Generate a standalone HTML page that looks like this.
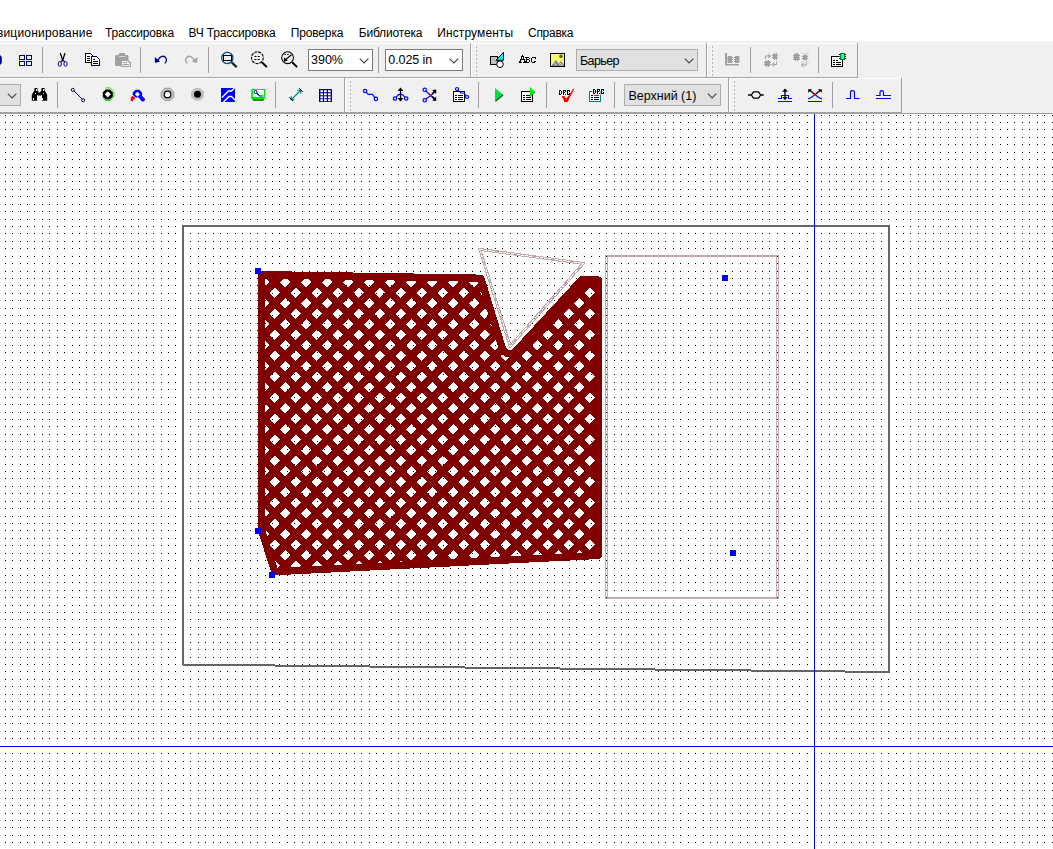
<!DOCTYPE html>
<html><head><meta charset="utf-8"><title>PCB Layout</title>
<style>
html,body{margin:0;padding:0;background:#fff;}
body{width:1053px;height:849px;position:relative;overflow:hidden;font-family:"Liberation Sans",sans-serif;}
.abs{position:absolute;}
#dock{left:0;top:41px;width:1053px;height:73px;background:#f0f0f0;}
.mi{position:absolute;top:26px;font-size:12px;line-height:15px;color:#000;white-space:nowrap;}
.combo{position:absolute;box-sizing:border-box;height:22px;border:1px solid #7a7a7a;background:#fff;font-size:12.5px;line-height:20px;color:#000;white-space:nowrap;overflow:hidden;}
.combo.dis{background:#e1e1e1;border-color:#adadad;}
.combo span{position:absolute;left:3px;top:-0.5px;}
#c1{left:2px}#c2{left:2.3px;letter-spacing:-0.08px}#c3{letter-spacing:-0.6px;top:0.5px}#c4{left:3.4px;top:0.5px}
</style></head><body>
<svg id="cv" width="1053" height="849" viewBox="0 0 1053 849" shape-rendering="crispEdges" style="position:absolute;left:0;top:0">
<!-- grid dots -->
<defs><mask id="rowmask" maskUnits="userSpaceOnUse" x="0" y="0" width="1053" height="849"><path fill="none" stroke="#fff" stroke-width="1" d="M0,115.5H1053M0,122.5H1053M0,129.5H1053M0,137.5H1053M0,144.5H1053M0,152.5H1053M0,159.5H1053M0,167.5H1053M0,174.5H1053M0,181.5H1053M0,189.5H1053M0,196.5H1053M0,204.5H1053M0,211.5H1053M0,219.5H1053M0,226.5H1053M0,233.5H1053M0,241.5H1053M0,248.5H1053M0,256.5H1053M0,263.5H1053M0,271.5H1053M0,278.5H1053M0,285.5H1053M0,293.5H1053M0,300.5H1053M0,308.5H1053M0,315.5H1053M0,323.5H1053M0,330.5H1053M0,337.5H1053M0,345.5H1053M0,352.5H1053M0,360.5H1053M0,367.5H1053M0,374.5H1053M0,382.5H1053M0,389.5H1053M0,397.5H1053M0,404.5H1053M0,412.5H1053M0,419.5H1053M0,426.5H1053M0,434.5H1053M0,441.5H1053M0,449.5H1053M0,456.5H1053M0,464.5H1053M0,471.5H1053M0,478.5H1053M0,486.5H1053M0,493.5H1053M0,501.5H1053M0,508.5H1053M0,516.5H1053M0,523.5H1053M0,530.5H1053M0,538.5H1053M0,545.5H1053M0,553.5H1053M0,560.5H1053M0,568.5H1053M0,575.5H1053M0,582.5H1053M0,590.5H1053M0,597.5H1053M0,605.5H1053M0,612.5H1053M0,619.5H1053M0,627.5H1053M0,634.5H1053M0,642.5H1053M0,649.5H1053M0,657.5H1053M0,664.5H1053M0,671.5H1053M0,679.5H1053M0,686.5H1053M0,694.5H1053M0,701.5H1053M0,709.5H1053M0,716.5H1053M0,723.5H1053M0,731.5H1053M0,738.5H1053M0,746.5H1053M0,753.5H1053M0,761.5H1053M0,768.5H1053M0,775.5H1053M0,783.5H1053M0,790.5H1053M0,798.5H1053M0,805.5H1053M0,813.5H1053M0,820.5H1053M0,827.5H1053M0,835.5H1053M0,842.5H1053"/></mask></defs>
<path mask="url(#rowmask)" fill="none" stroke="#000" stroke-width="1" d="M5.5,114V849M12.5,114V849M20.5,114V849M27.5,114V849M34.5,114V849M42.5,114V849M49.5,114V849M57.5,114V849M64.5,114V849M72.5,114V849M79.5,114V849M86.5,114V849M94.5,114V849M101.5,114V849M109.5,114V849M116.5,114V849M123.5,114V849M131.5,114V849M138.5,114V849M146.5,114V849M153.5,114V849M161.5,114V849M168.5,114V849M175.5,114V849M183.5,114V849M190.5,114V849M198.5,114V849M205.5,114V849M213.5,114V849M220.5,114V849M227.5,114V849M235.5,114V849M242.5,114V849M250.5,114V849M257.5,114V849M265.5,114V849M272.5,114V849M279.5,114V849M287.5,114V849M294.5,114V849M302.5,114V849M309.5,114V849M317.5,114V849M324.5,114V849M331.5,114V849M339.5,114V849M346.5,114V849M354.5,114V849M361.5,114V849M369.5,114V849M376.5,114V849M383.5,114V849M391.5,114V849M398.5,114V849M406.5,114V849M413.5,114V849M420.5,114V849M428.5,114V849M435.5,114V849M443.5,114V849M450.5,114V849M458.5,114V849M465.5,114V849M472.5,114V849M480.5,114V849M487.5,114V849M495.5,114V849M502.5,114V849M510.5,114V849M517.5,114V849M524.5,114V849M532.5,114V849M539.5,114V849M547.5,114V849M554.5,114V849M562.5,114V849M569.5,114V849M576.5,114V849M584.5,114V849M591.5,114V849M599.5,114V849M606.5,114V849M614.5,114V849M621.5,114V849M628.5,114V849M636.5,114V849M643.5,114V849M651.5,114V849M658.5,114V849M665.5,114V849M673.5,114V849M680.5,114V849M688.5,114V849M695.5,114V849M703.5,114V849M710.5,114V849M717.5,114V849M725.5,114V849M732.5,114V849M740.5,114V849M747.5,114V849M755.5,114V849M762.5,114V849M769.5,114V849M777.5,114V849M784.5,114V849M792.5,114V849M799.5,114V849M807.5,114V849M814.5,114V849M821.5,114V849M829.5,114V849M836.5,114V849M844.5,114V849M851.5,114V849M859.5,114V849M866.5,114V849M873.5,114V849M881.5,114V849M888.5,114V849M896.5,114V849M903.5,114V849M910.5,114V849M918.5,114V849M925.5,114V849M933.5,114V849M940.5,114V849M948.5,114V849M955.5,114V849M962.5,114V849M970.5,114V849M977.5,114V849M985.5,114V849M992.5,114V849M1000.5,114V849M1007.5,114V849M1014.5,114V849M1022.5,114V849M1029.5,114V849M1037.5,114V849M1044.5,114V849M1052.5,114V849"/>

<!-- keepout outlines -->
<g fill="none" stroke="#c2aaaa">
<path stroke-width="2" d="M605,256H779M605,598H779"/>
<path stroke-width="1" d="M605.5,255V599M607.5,255V599M776.5,255V599M778.5,255V599"/>
<path stroke-width="3" stroke-linejoin="round" d="M479.8,249.4L583.3,263.4L510.2,346.3Z"/>
<path stroke="#fff" stroke-width="1" stroke-dasharray="3 1 3 1 3 1 3 4" d="M479.8,249.4L583.3,263.4L510.2,346.3Z"/>
</g>
<path fill="#000" d="M606,256h1v1h-1zM777,256h1v1h-1zM606,597h1v1h-1zM777,597h1v1h-1z"/>
<!-- copper pour -->
<path fill="#800000" fill-rule="evenodd" d="M260.9,271.0 260.3,271.2 259.1,272.0 258.3,273.2 258.0,274.6 258.0,530.9 258.2,532.0 271.4,572.8 271.7,573.4 272.6,574.4 273.7,575.1 275.1,575.3 598.7,559.0 600.0,558.6 601.1,557.9 601.8,556.7 602.1,555.4 602.1,280.0 601.8,278.6 601.1,277.4 599.9,276.7 598.6,276.4 581.5,276.1 580.1,276.4 579.4,276.8 513.1,348.7 511.6,349.8 510.0,350.2 508.4,349.9 507.3,349.3 506.5,348.4 505.8,347.2 484.3,277.0 483.6,275.7 483.0,275.2 481.7,274.6ZM301.1,282.4 304.5,279.0 308.1,279.0 311.5,282.4 306.3,287.6ZM285.3,287.6 280.1,282.4 283.9,278.6 286.8,278.7 290.5,282.4ZM265.3,286.6 265.3,278.3 269.5,282.4ZM269.6,292.9 274.8,287.7 280.0,292.9 274.8,298.1ZM295.8,298.1 290.6,292.9 295.8,287.7 301.0,292.9ZM306.3,308.6 301.1,303.4 306.3,298.2 311.5,303.4ZM280.1,303.4 285.3,298.2 290.5,303.4 285.3,308.6ZM265.3,307.6 265.3,299.2 269.5,303.4ZM295.8,319.1 290.6,313.9 295.8,308.7 301.0,313.9ZM274.8,319.1 269.6,313.9 274.8,308.7 280.0,313.9ZM306.3,329.6 301.1,324.4 306.3,319.2 311.5,324.4ZM285.3,329.6 280.1,324.4 285.3,319.2 290.5,324.4ZM265.3,328.6 265.3,320.2 269.5,324.4ZM269.6,334.9 274.8,329.7 280.0,334.9 274.8,340.1ZM295.8,340.1 290.6,334.9 295.8,329.7 301.0,334.9ZM306.3,350.6 301.1,345.4 306.3,340.2 311.5,345.4ZM280.1,345.4 285.3,340.2 290.5,345.4 285.3,350.6ZM265.3,349.6 265.3,341.2 269.5,345.4ZM295.8,361.1 290.6,355.9 295.8,350.7 301.0,355.9ZM269.6,355.9 274.8,350.7 280.0,355.9 274.8,361.1ZM265.3,370.6 265.3,362.2 269.5,366.4ZM285.3,371.6 280.1,366.4 285.3,361.2 290.5,366.4ZM295.8,382.1 290.6,376.9 295.8,371.7 301.0,376.9ZM274.8,382.1 269.6,376.9 274.8,371.7 280.0,376.9ZM265.3,391.6 265.3,383.2 269.5,387.4ZM285.3,392.6 280.1,387.4 285.3,382.2 290.5,387.4ZM290.6,397.9 295.8,392.7 301.0,397.9 295.8,403.1ZM274.8,403.1 269.6,397.9 274.8,392.7 280.0,397.9ZM265.3,412.6 265.3,404.2 269.5,408.4ZM280.1,408.4 285.3,403.2 290.5,408.4 285.3,413.6ZM295.8,424.1 290.6,418.9 295.8,413.7 301.0,418.9ZM274.8,424.1 269.6,418.9 274.8,413.7 280.0,418.9ZM280.1,429.4 285.3,424.2 290.5,429.4 285.3,434.6ZM265.3,433.6 265.3,425.2 269.5,429.4ZM274.8,445.1 269.6,439.9 274.8,434.7 280.0,439.9ZM295.8,445.1 290.6,439.9 295.8,434.7 301.0,439.9ZM285.3,455.6 280.1,450.4 285.3,445.2 290.5,450.4ZM265.3,454.6 265.3,446.2 269.5,450.4ZM306.3,455.6 301.1,450.4 306.3,445.2 311.5,450.4ZM269.6,460.9 274.8,455.7 280.0,460.9 274.8,466.1ZM295.8,466.1 290.6,460.9 295.8,455.7 301.0,460.9ZM265.3,475.6 265.3,467.2 269.5,471.4ZM280.1,471.4 285.3,466.2 290.5,471.4 285.3,476.6ZM295.8,487.1 290.6,481.9 295.8,476.7 301.0,481.9ZM274.8,487.1 269.6,481.9 274.8,476.7 280.0,481.9ZM280.1,492.4 285.3,487.2 290.5,492.4 285.3,497.6ZM265.3,496.6 265.3,488.2 269.5,492.4ZM274.8,508.1 269.6,502.9 274.8,497.7 280.0,502.9ZM295.8,508.1 290.6,502.9 295.8,497.7 301.0,502.9ZM265.3,517.6 265.3,509.2 269.5,513.4ZM285.3,518.6 280.1,513.4 285.3,508.2 290.5,513.4ZM295.8,529.1 290.6,523.9 295.8,518.7 301.0,523.9ZM269.6,523.9 274.8,518.7 280.0,523.9 274.8,529.1ZM285.3,539.6 280.1,534.4 285.3,529.2 290.5,534.4ZM267.3,536.6 265.3,530.3 265.3,530.2 269.5,534.4ZM290.6,544.9 295.8,539.7 301.0,544.9 295.8,550.1ZM274.8,550.1 270.3,545.6 269.9,544.6 274.8,539.7 280.0,544.9ZM285.3,560.6 280.1,555.4 285.3,550.2 290.5,555.4ZM290.6,565.9 295.8,560.7 301.0,565.9 300.2,566.7 291.8,567.1ZM278.1,567.8 277.5,567.8 275.4,561.3 280.0,565.9ZM327.3,287.6 322.1,282.4 325.2,279.3 329.5,279.4 332.5,282.4ZM316.8,298.1 311.6,292.9 316.8,287.7 322.0,292.9ZM337.8,298.1 332.6,292.9 337.8,287.7 343.0,292.9ZM327.3,308.6 322.1,303.4 327.3,298.2 332.5,303.4ZM348.3,308.6 343.1,303.4 348.3,298.2 353.5,303.4ZM332.6,313.9 337.8,308.7 343.0,313.9 337.8,319.1ZM316.8,319.1 311.6,313.9 316.8,308.7 322.0,313.9ZM348.3,329.6 343.1,324.4 348.3,319.2 353.5,324.4ZM322.1,324.4 327.3,319.2 332.5,324.4 327.3,329.6ZM337.8,340.1 332.6,334.9 337.8,329.7 343.0,334.9ZM316.8,340.1 311.6,334.9 316.8,329.7 322.0,334.9ZM343.1,345.4 348.3,340.2 353.5,345.4 348.3,350.6ZM327.3,350.6 322.1,345.4 327.3,340.2 332.5,345.4ZM316.8,361.1 311.6,355.9 316.8,350.7 322.0,355.9ZM337.8,361.1 332.6,355.9 337.8,350.7 343.0,355.9ZM348.3,371.6 343.1,366.4 348.3,361.2 353.5,366.4ZM327.3,371.6 322.1,366.4 327.3,361.2 332.5,366.4ZM306.3,371.6 301.1,366.4 306.3,361.2 311.5,366.4ZM332.6,376.9 337.8,371.7 343.0,376.9 337.8,382.1ZM316.8,382.1 311.6,376.9 316.8,371.7 322.0,376.9ZM327.3,392.6 322.1,387.4 327.3,382.2 332.5,387.4ZM301.1,387.4 306.3,382.2 311.5,387.4 306.3,392.6ZM348.3,392.6 343.1,387.4 348.3,382.2 353.5,387.4ZM316.8,403.1 311.6,397.9 316.8,392.7 322.0,397.9ZM332.6,397.9 337.8,392.7 343.0,397.9 337.8,403.1ZM348.3,413.6 343.1,408.4 348.3,403.2 353.5,408.4ZM327.3,413.6 322.1,408.4 327.3,403.2 332.5,408.4ZM306.3,413.6 301.1,408.4 306.3,403.2 311.5,408.4ZM316.8,424.1 311.6,418.9 316.8,413.7 322.0,418.9ZM337.8,424.1 332.6,418.9 337.8,413.7 343.0,418.9ZM348.3,434.6 343.1,429.4 348.3,424.2 353.5,429.4ZM322.1,429.4 327.3,424.2 332.5,429.4 327.3,434.6ZM306.3,434.6 301.1,429.4 306.3,424.2 311.5,429.4ZM337.8,445.1 332.6,439.9 337.8,434.7 343.0,439.9ZM311.6,439.9 316.8,434.7 322.0,439.9 316.8,445.1ZM348.3,455.6 343.1,450.4 348.3,445.2 353.5,450.4ZM327.3,455.6 322.1,450.4 327.3,445.2 332.5,450.4ZM332.6,460.9 337.8,455.7 343.0,460.9 337.8,466.1ZM316.8,466.1 311.6,460.9 316.8,455.7 322.0,460.9ZM327.3,476.6 322.1,471.4 327.3,466.2 332.5,471.4ZM306.3,476.6 301.1,471.4 306.3,466.2 311.5,471.4ZM337.8,487.1 332.6,481.9 337.8,476.7 343.0,481.9ZM316.8,487.1 311.6,481.9 316.8,476.7 322.0,481.9ZM306.3,497.6 301.1,492.4 306.3,487.2 311.5,492.4ZM322.1,492.4 327.3,487.2 332.5,492.4 327.3,497.6ZM316.8,508.1 311.6,502.9 316.8,497.7 322.0,502.9ZM337.8,508.1 332.6,502.9 337.8,497.7 343.0,502.9ZM322.1,513.4 327.3,508.2 332.5,513.4 327.3,518.6ZM306.3,518.6 301.1,513.4 306.3,508.2 311.5,513.4ZM337.8,529.1 332.6,523.9 337.8,518.7 343.0,523.9ZM311.6,523.9 316.8,518.7 322.0,523.9 316.8,529.1ZM327.3,539.6 322.1,534.4 327.3,529.2 332.5,534.4ZM306.3,539.6 301.1,534.4 306.3,529.2 311.5,534.4ZM337.8,550.1 332.6,544.9 337.8,539.7 343.0,544.9ZM316.8,550.1 311.6,544.9 316.8,539.7 322.0,544.9ZM348.3,560.6 343.1,555.4 348.3,550.2 353.5,555.4ZM306.3,560.6 301.1,555.4 306.3,550.2 311.5,555.4ZM322.1,555.4 327.3,550.2 332.5,555.4 327.3,560.6ZM341.7,564.6 333.5,565.0 337.8,560.7ZM321.7,565.6 311.8,566.1 311.6,565.9 316.8,560.7ZM385.1,282.4 387.2,280.3 393.5,280.4 395.5,282.4 390.3,287.6ZM348.3,287.6 343.1,282.4 345.9,279.6 350.8,279.7 353.5,282.4ZM369.3,287.6 364.1,282.4 366.5,280.0 372.2,280.1 374.5,282.4ZM353.6,292.9 358.8,287.7 364.0,292.9 358.8,298.1ZM379.8,298.1 374.6,292.9 379.8,287.7 385.0,292.9ZM390.3,308.6 385.1,303.4 390.3,298.2 395.5,303.4ZM369.3,308.6 364.1,303.4 369.3,298.2 374.5,303.4ZM358.8,319.1 353.6,313.9 358.8,308.7 364.0,313.9ZM379.8,319.1 374.6,313.9 379.8,308.7 385.0,313.9ZM369.3,329.6 364.1,324.4 369.3,319.2 374.5,324.4ZM385.1,324.4 390.3,319.2 395.5,324.4 390.3,329.6ZM358.8,340.1 353.6,334.9 358.8,329.7 364.0,334.9ZM379.8,340.1 374.6,334.9 379.8,329.7 385.0,334.9ZM385.1,345.4 390.3,340.2 395.5,345.4 390.3,350.6ZM369.3,350.6 364.1,345.4 369.3,340.2 374.5,345.4ZM379.8,361.1 374.6,355.9 379.8,350.7 385.0,355.9ZM353.6,355.9 358.8,350.7 364.0,355.9 358.8,361.1ZM390.3,371.6 385.1,366.4 390.3,361.2 395.5,366.4ZM369.3,371.6 364.1,366.4 369.3,361.2 374.5,366.4ZM379.8,382.1 374.6,376.9 379.8,371.7 385.0,376.9ZM358.8,382.1 353.6,376.9 358.8,371.7 364.0,376.9ZM369.3,392.6 364.1,387.4 369.3,382.2 374.5,387.4ZM390.3,392.6 385.1,387.4 390.3,382.2 395.5,387.4ZM374.6,397.9 379.8,392.7 385.0,397.9 379.8,403.1ZM358.8,403.1 353.6,397.9 358.8,392.7 364.0,397.9ZM390.3,413.6 385.1,408.4 390.3,403.2 395.5,408.4ZM364.1,408.4 369.3,403.2 374.5,408.4 369.3,413.6ZM379.8,424.1 374.6,418.9 379.8,413.7 385.0,418.9ZM358.8,424.1 353.6,418.9 358.8,413.7 364.0,418.9ZM364.1,429.4 369.3,424.2 374.5,429.4 369.3,434.6ZM358.8,445.1 353.6,439.9 358.8,434.7 364.0,439.9ZM379.8,445.1 374.6,439.9 379.8,434.7 385.0,439.9ZM369.3,455.6 364.1,450.4 369.3,445.2 374.5,450.4ZM390.3,455.6 385.1,450.4 390.3,445.2 395.5,450.4ZM379.8,466.1 374.6,460.9 379.8,455.7 385.0,460.9ZM358.8,466.1 353.6,460.9 358.8,455.7 364.0,460.9ZM343.1,471.4 348.3,466.2 353.5,471.4 348.3,476.6ZM369.3,476.6 364.1,471.4 369.3,466.2 374.5,471.4ZM390.3,476.6 385.1,471.4 390.3,466.2 395.5,471.4ZM353.6,481.9 358.8,476.7 364.0,481.9 358.8,487.1ZM379.8,487.1 374.6,481.9 379.8,476.7 385.0,481.9ZM348.3,497.6 343.1,492.4 348.3,487.2 353.5,492.4ZM385.1,492.4 390.3,487.2 395.5,492.4 390.3,497.6ZM369.3,497.6 364.1,492.4 369.3,487.2 374.5,492.4ZM358.8,508.1 353.6,502.9 358.8,497.7 364.0,502.9ZM379.8,508.1 374.6,502.9 379.8,497.7 385.0,502.9ZM390.3,518.6 385.1,513.4 390.3,508.2 395.5,513.4ZM369.3,518.6 364.1,513.4 369.3,508.2 374.5,513.4ZM348.3,518.6 343.1,513.4 348.3,508.2 353.5,513.4ZM353.6,523.9 358.8,518.7 364.0,523.9 358.8,529.1ZM379.8,529.1 374.6,523.9 379.8,518.7 385.0,523.9ZM348.3,539.6 343.1,534.4 348.3,529.2 353.5,534.4ZM385.1,534.4 390.3,529.2 395.5,534.4 390.3,539.6ZM369.3,539.6 364.1,534.4 369.3,529.2 374.5,534.4ZM379.8,550.1 374.6,544.9 379.8,539.7 385.0,544.9ZM353.6,544.9 358.8,539.7 364.0,544.9 358.8,550.1ZM390.3,560.6 385.1,555.4 390.3,550.2 395.5,555.4ZM369.3,560.6 364.1,555.4 369.3,550.2 374.5,555.4ZM381.7,562.6 377.7,562.8 379.8,560.7ZM361.7,563.6 355.6,563.9 358.8,560.7ZM432.3,287.6 427.1,282.4 428.5,281.0 436.2,281.1 437.5,282.4ZM411.3,287.6 406.1,282.4 407.9,280.6 414.8,280.7 416.5,282.4ZM437.6,292.9 442.8,287.7 448.0,292.9 442.8,298.1ZM421.8,298.1 416.6,292.9 421.8,287.7 427.0,292.9ZM400.8,298.1 395.6,292.9 400.8,287.7 406.0,292.9ZM406.1,303.4 411.3,298.2 416.5,303.4 411.3,308.6ZM432.3,308.6 427.1,303.4 432.3,298.2 437.5,303.4ZM421.8,319.1 416.6,313.9 421.8,308.7 427.0,313.9ZM437.6,313.9 442.8,308.7 448.0,313.9 442.8,319.1ZM400.8,319.1 395.6,313.9 400.8,308.7 406.0,313.9ZM411.3,329.6 406.1,324.4 411.3,319.2 416.5,324.4ZM432.3,329.6 427.1,324.4 432.3,319.2 437.5,324.4ZM442.8,340.1 437.6,334.9 442.8,329.7 448.0,334.9ZM400.8,340.1 395.6,334.9 400.8,329.7 406.0,334.9ZM421.8,340.1 416.6,334.9 421.8,329.7 427.0,334.9ZM427.1,345.4 432.3,340.2 437.5,345.4 432.3,350.6ZM411.3,350.6 406.1,345.4 411.3,340.2 416.5,345.4ZM400.8,361.1 395.6,355.9 400.8,350.7 406.0,355.9ZM421.8,361.1 416.6,355.9 421.8,350.7 427.0,355.9ZM432.3,371.6 427.1,366.4 432.3,361.2 437.5,366.4ZM411.3,371.6 406.1,366.4 411.3,361.2 416.5,366.4ZM421.8,382.1 416.6,376.9 421.8,371.7 427.0,376.9ZM395.6,376.9 400.8,371.7 406.0,376.9 400.8,382.1ZM432.3,392.6 427.1,387.4 432.3,382.2 437.5,387.4ZM411.3,392.6 406.1,387.4 411.3,382.2 416.5,387.4ZM421.8,403.1 416.6,397.9 421.8,392.7 427.0,397.9ZM400.8,403.1 395.6,397.9 400.8,392.7 406.0,397.9ZM432.3,413.6 427.1,408.4 432.3,403.2 437.5,408.4ZM411.3,413.6 406.1,408.4 411.3,403.2 416.5,408.4ZM395.6,418.9 400.8,413.7 406.0,418.9 400.8,424.1ZM421.8,424.1 416.6,418.9 421.8,413.7 427.0,418.9ZM411.3,434.6 406.1,429.4 411.3,424.2 416.5,429.4ZM427.1,429.4 432.3,424.2 437.5,429.4 432.3,434.6ZM390.3,434.6 385.1,429.4 390.3,424.2 395.5,429.4ZM400.8,445.1 395.6,439.9 400.8,434.7 406.0,439.9ZM416.6,439.9 421.8,434.7 427.0,439.9 421.8,445.1ZM411.3,455.6 406.1,450.4 411.3,445.2 416.5,450.4ZM432.3,455.6 427.1,450.4 432.3,445.2 437.5,450.4ZM421.8,466.1 416.6,460.9 421.8,455.7 427.0,460.9ZM400.8,466.1 395.6,460.9 400.8,455.7 406.0,460.9ZM432.3,476.6 427.1,471.4 432.3,466.2 437.5,471.4ZM411.3,476.6 406.1,471.4 411.3,466.2 416.5,471.4ZM416.6,481.9 421.8,476.7 427.0,481.9 421.8,487.1ZM400.8,487.1 395.6,481.9 400.8,476.7 406.0,481.9ZM411.3,497.6 406.1,492.4 411.3,487.2 416.5,492.4ZM427.1,492.4 432.3,487.2 437.5,492.4 432.3,497.6ZM421.8,508.1 416.6,502.9 421.8,497.7 427.0,502.9ZM400.8,508.1 395.6,502.9 400.8,497.7 406.0,502.9ZM406.1,513.4 411.3,508.2 416.5,513.4 411.3,518.6ZM432.3,518.6 427.1,513.4 432.3,508.2 437.5,513.4ZM421.8,529.1 416.6,523.9 421.8,518.7 427.0,523.9ZM400.8,529.1 395.6,523.9 400.8,518.7 406.0,523.9ZM411.3,539.6 406.1,534.4 411.3,529.2 416.5,534.4ZM432.3,539.6 427.1,534.4 432.3,529.2 437.5,534.4ZM421.8,550.1 416.6,544.9 421.8,539.7 427.0,544.9ZM437.6,544.9 442.8,539.7 448.0,544.9 442.8,550.1ZM400.8,550.1 395.6,544.9 400.8,539.7 406.0,544.9ZM411.3,560.6 406.1,555.4 411.3,550.2 416.5,555.4ZM427.1,555.4 432.3,550.2 437.5,555.4 432.9,560.0 431.8,560.1ZM401.7,561.6 399.8,561.7 400.8,560.7ZM474.3,287.6 469.1,282.4 469.9,281.6 478.1,281.7 478.6,283.3ZM448.1,282.4 449.2,281.3 457.5,281.4 458.5,282.4 453.3,287.6ZM463.8,298.1 458.6,292.9 463.8,287.7 469.0,292.9ZM481.1,291.4 482.4,295.7 479.6,292.9ZM474.3,308.6 469.1,303.4 474.3,298.2 479.5,303.4ZM453.3,308.6 448.1,303.4 453.3,298.2 458.5,303.4ZM463.8,319.1 458.6,313.9 463.8,308.7 469.0,313.9ZM484.8,319.1 479.6,313.9 484.8,308.7 487.1,311.0 488.4,315.5ZM469.1,324.4 474.3,319.2 479.5,324.4 474.3,329.6ZM453.3,329.6 448.1,324.4 453.3,319.2 458.5,324.4ZM463.8,340.1 458.6,334.9 463.8,329.7 469.0,334.9ZM448.1,345.4 453.3,340.2 458.5,345.4 453.3,350.6ZM474.3,350.6 469.1,345.4 474.3,340.2 479.5,345.4ZM463.8,361.1 458.6,355.9 463.8,350.7 469.0,355.9ZM437.6,355.9 442.8,350.7 448.0,355.9 442.8,361.1ZM453.3,371.6 448.1,366.4 453.3,361.2 458.5,366.4ZM474.3,371.6 469.1,366.4 474.3,361.2 479.5,366.4ZM463.8,382.1 458.6,376.9 463.8,371.7 469.0,376.9ZM442.8,382.1 437.6,376.9 442.8,371.7 448.0,376.9ZM453.3,392.6 448.1,387.4 453.3,382.2 458.5,387.4ZM474.3,392.6 469.1,387.4 474.3,382.2 479.5,387.4ZM479.6,397.9 484.8,392.7 490.0,397.9 484.8,403.1ZM463.8,403.1 458.6,397.9 463.8,392.7 469.0,397.9ZM442.8,403.1 437.6,397.9 442.8,392.7 448.0,397.9ZM448.1,408.4 453.3,403.2 458.5,408.4 453.3,413.6ZM474.3,413.6 469.1,408.4 474.3,403.2 479.5,408.4ZM484.8,424.1 479.6,418.9 484.8,413.7 490.0,418.9ZM437.6,418.9 442.8,413.7 448.0,418.9 442.8,424.1ZM463.8,424.1 458.6,418.9 463.8,413.7 469.0,418.9ZM453.3,434.6 448.1,429.4 453.3,424.2 458.5,429.4ZM474.3,434.6 469.1,429.4 474.3,424.2 479.5,429.4ZM463.8,445.1 458.6,439.9 463.8,434.7 469.0,439.9ZM442.8,445.1 437.6,439.9 442.8,434.7 448.0,439.9ZM484.8,445.1 479.6,439.9 484.8,434.7 490.0,439.9ZM448.1,450.4 453.3,445.2 458.5,450.4 453.3,455.6ZM474.3,455.6 469.1,450.4 474.3,445.2 479.5,450.4ZM484.8,466.1 479.6,460.9 484.8,455.7 490.0,460.9ZM437.6,460.9 442.8,455.7 448.0,460.9 442.8,466.1ZM463.8,466.1 458.6,460.9 463.8,455.7 469.0,460.9ZM453.3,476.6 448.1,471.4 453.3,466.2 458.5,471.4ZM469.1,471.4 474.3,466.2 479.5,471.4 474.3,476.6ZM484.8,487.1 479.6,481.9 484.8,476.7 490.0,481.9ZM463.8,487.1 458.6,481.9 463.8,476.7 469.0,481.9ZM442.8,487.1 437.6,481.9 442.8,476.7 448.0,481.9ZM453.3,497.6 448.1,492.4 453.3,487.2 458.5,492.4ZM474.3,497.6 469.1,492.4 474.3,487.2 479.5,492.4ZM463.8,508.1 458.6,502.9 463.8,497.7 469.0,502.9ZM437.6,502.9 442.8,497.7 448.0,502.9 442.8,508.1ZM484.8,508.1 479.6,502.9 484.8,497.7 490.0,502.9ZM474.3,518.6 469.1,513.4 474.3,508.2 479.5,513.4ZM448.1,513.4 453.3,508.2 458.5,513.4 453.3,518.6ZM442.8,529.1 437.6,523.9 442.8,518.7 448.0,523.9ZM463.8,529.1 458.6,523.9 463.8,518.7 469.0,523.9ZM479.6,523.9 484.8,518.7 490.0,523.9 484.8,529.1ZM474.3,539.6 469.1,534.4 474.3,529.2 479.5,534.4ZM453.3,539.6 448.1,534.4 453.3,529.2 458.5,534.4ZM484.8,550.1 479.6,544.9 484.8,539.7 490.0,544.9ZM463.8,550.1 458.6,544.9 463.8,539.7 469.0,544.9ZM455.0,558.9 451.8,559.1 448.1,555.4 453.3,550.2 458.5,555.4ZM477.1,557.8 471.8,558.1 469.1,555.4 474.3,550.2 479.5,555.4ZM490.1,324.4 490.9,323.6 491.7,326.0ZM484.8,340.1 479.6,334.9 484.8,329.7 490.0,334.9ZM547.8,340.1 542.6,334.9 547.8,329.7 553.0,334.9ZM490.1,345.4 495.3,340.2 496.4,341.3 498.3,347.6 495.3,350.6ZM537.3,350.6 532.1,345.4 537.3,340.2 542.5,345.4ZM484.8,361.1 479.6,355.9 484.8,350.7 490.0,355.9ZM542.6,355.9 547.8,350.7 553.0,355.9 547.8,361.1ZM526.8,361.1 521.6,355.9 526.8,350.7 532.0,355.9ZM505.8,361.1 500.6,355.9 502.1,354.4 503.8,355.7 505.8,356.7 507.9,357.3 509.5,357.4ZM495.3,371.6 490.1,366.4 495.3,361.2 500.5,366.4ZM537.3,371.6 532.1,366.4 537.3,361.2 542.5,366.4ZM516.3,371.6 511.1,366.4 516.3,361.2 521.5,366.4ZM526.8,382.1 521.6,376.9 526.8,371.7 532.0,376.9ZM479.6,376.9 484.8,371.7 490.0,376.9 484.8,382.1ZM505.8,382.1 500.6,376.9 505.8,371.7 511.0,376.9ZM537.3,392.6 532.1,387.4 537.3,382.2 542.5,387.4ZM490.1,387.4 495.3,382.2 500.5,387.4 495.3,392.6ZM516.3,392.6 511.1,387.4 516.3,382.2 521.5,387.4ZM505.8,403.1 500.6,397.9 505.8,392.7 511.0,397.9ZM521.6,397.9 526.8,392.7 532.0,397.9 526.8,403.1ZM537.3,413.6 532.1,408.4 537.3,403.2 542.5,408.4ZM495.3,413.6 490.1,408.4 495.3,403.2 500.5,408.4ZM516.3,413.6 511.1,408.4 516.3,403.2 521.5,408.4ZM505.8,424.1 500.6,418.9 505.8,413.7 511.0,418.9ZM526.8,424.1 521.6,418.9 526.8,413.7 532.0,418.9ZM516.3,434.6 511.1,429.4 516.3,424.2 521.5,429.4ZM532.1,429.4 537.3,424.2 542.5,429.4 537.3,434.6ZM495.3,434.6 490.1,429.4 495.3,424.2 500.5,429.4ZM526.8,445.1 521.6,439.9 526.8,434.7 532.0,439.9ZM500.6,439.9 505.8,434.7 511.0,439.9 505.8,445.1ZM537.3,455.6 532.1,450.4 537.3,445.2 542.5,450.4ZM495.3,455.6 490.1,450.4 495.3,445.2 500.5,450.4ZM511.1,450.4 516.3,445.2 521.5,450.4 516.3,455.6ZM505.8,466.1 500.6,460.9 505.8,455.7 511.0,460.9ZM526.8,466.1 521.6,460.9 526.8,455.7 532.0,460.9ZM495.3,476.6 490.1,471.4 495.3,466.2 500.5,471.4ZM516.3,476.6 511.1,471.4 516.3,466.2 521.5,471.4ZM537.3,476.6 532.1,471.4 537.3,466.2 542.5,471.4ZM526.8,487.1 521.6,481.9 526.8,476.7 532.0,481.9ZM500.6,481.9 505.8,476.7 511.0,481.9 505.8,487.1ZM495.3,497.6 490.1,492.4 495.3,487.2 500.5,492.4ZM537.3,497.6 532.1,492.4 537.3,487.2 542.5,492.4ZM511.1,492.4 516.3,487.2 521.5,492.4 516.3,497.6ZM505.8,508.1 500.6,502.9 505.8,497.7 511.0,502.9ZM526.8,508.1 521.6,502.9 526.8,497.7 532.0,502.9ZM511.1,513.4 516.3,508.2 521.5,513.4 516.3,518.6ZM537.3,518.6 532.1,513.4 537.3,508.2 542.5,513.4ZM495.3,518.6 490.1,513.4 495.3,508.2 500.5,513.4ZM526.8,529.1 521.6,523.9 526.8,518.7 532.0,523.9ZM547.8,529.1 542.6,523.9 547.8,518.7 553.0,523.9ZM505.8,529.1 500.6,523.9 505.8,518.7 511.0,523.9ZM495.3,539.6 490.1,534.4 495.3,529.2 500.5,534.4ZM532.1,534.4 537.3,529.2 542.5,534.4 537.3,539.6ZM516.3,539.6 511.1,534.4 516.3,529.2 521.5,534.4ZM505.8,550.1 500.6,544.9 505.8,539.7 511.0,544.9ZM521.6,544.9 526.8,539.7 532.0,544.9 526.8,550.1ZM547.8,550.1 542.6,544.9 547.8,539.7 553.0,544.9ZM541.6,554.5 532.5,555.0 537.3,550.2ZM490.1,555.4 495.3,550.2 500.5,555.4 499.2,556.7 491.7,557.0ZM521.3,555.6 511.7,556.0 511.1,555.4 516.3,550.2 521.5,555.4ZM579.3,287.6 583.1,283.4 583.5,283.4ZM589.8,298.1 584.6,292.9 589.8,287.7 594.8,292.7 594.8,293.1ZM579.3,308.6 574.1,303.4 579.3,298.2 584.5,303.4ZM568.8,319.1 563.6,313.9 568.8,308.7 574.0,313.9ZM589.8,319.1 584.6,313.9 589.8,308.7 594.8,313.7 594.8,314.1ZM574.1,324.4 579.3,319.2 584.5,324.4 579.3,329.6ZM558.3,329.6 553.1,324.4 558.3,319.2 563.5,324.4ZM568.8,340.1 563.6,334.9 568.8,329.7 574.0,334.9ZM584.6,334.9 589.8,329.7 594.8,334.7 594.8,335.1 589.8,340.1ZM558.3,350.6 553.1,345.4 558.3,340.2 563.5,345.4ZM579.3,350.6 574.1,345.4 579.3,340.2 584.5,345.4ZM584.6,355.9 589.8,350.7 594.8,355.7 594.8,356.1 589.8,361.1ZM568.8,361.1 563.6,355.9 568.8,350.7 574.0,355.9ZM558.3,371.6 553.1,366.4 558.3,361.2 563.5,366.4ZM579.3,371.6 574.1,366.4 579.3,361.2 584.5,366.4ZM568.8,382.1 563.6,376.9 568.8,371.7 574.0,376.9ZM547.8,382.1 542.6,376.9 547.8,371.7 553.0,376.9ZM589.8,382.1 584.6,376.9 589.8,371.7 594.8,376.7 594.8,377.1ZM553.1,387.4 558.3,382.2 563.5,387.4 558.3,392.6ZM579.3,392.6 574.1,387.4 579.3,382.2 584.5,387.4ZM589.8,403.1 584.6,397.9 589.8,392.7 594.8,397.7 594.8,398.1ZM542.6,397.9 547.8,392.7 553.0,397.9 547.8,403.1ZM568.8,403.1 563.6,397.9 568.8,392.7 574.0,397.9ZM558.3,413.6 553.1,408.4 558.3,403.2 563.5,408.4ZM574.1,408.4 579.3,403.2 584.5,408.4 579.3,413.6ZM568.8,424.1 563.6,418.9 568.8,413.7 574.0,418.9ZM589.8,424.1 584.6,418.9 589.8,413.7 594.8,418.7 594.8,419.1ZM547.8,424.1 542.6,418.9 547.8,413.7 553.0,418.9ZM558.3,434.6 553.1,429.4 558.3,424.2 563.5,429.4ZM579.3,434.6 574.1,429.4 579.3,424.2 584.5,429.4ZM568.8,445.1 563.6,439.9 568.8,434.7 574.0,439.9ZM584.6,439.9 589.8,434.7 594.8,439.7 594.8,440.1 589.8,445.1ZM547.8,445.1 542.6,439.9 547.8,434.7 553.0,439.9ZM558.3,455.6 553.1,450.4 558.3,445.2 563.5,450.4ZM574.1,450.4 579.3,445.2 584.5,450.4 579.3,455.6ZM568.8,466.1 563.6,460.9 568.8,455.7 574.0,460.9ZM589.8,466.1 584.6,460.9 589.8,455.7 594.8,460.7 594.8,461.1ZM542.6,460.9 547.8,455.7 553.0,460.9 547.8,466.1ZM558.3,476.6 553.1,471.4 558.3,466.2 563.5,471.4ZM579.3,476.6 574.1,471.4 579.3,466.2 584.5,471.4ZM568.8,487.1 563.6,481.9 568.8,476.7 574.0,481.9ZM547.8,487.1 542.6,481.9 547.8,476.7 553.0,481.9ZM589.8,487.1 584.6,481.9 589.8,476.7 594.8,481.7 594.8,482.1ZM558.3,497.6 553.1,492.4 558.3,487.2 563.5,492.4ZM574.1,492.4 579.3,487.2 584.5,492.4 579.3,497.6ZM547.8,508.1 542.6,502.9 547.8,497.7 553.0,502.9ZM568.8,508.1 563.6,502.9 568.8,497.7 574.0,502.9ZM589.8,508.1 584.6,502.9 589.8,497.7 594.8,502.7 594.8,503.1ZM558.3,518.6 553.1,513.4 558.3,508.2 563.5,513.4ZM579.3,518.6 574.1,513.4 579.3,508.2 584.5,513.4ZM568.8,529.1 563.6,523.9 568.8,518.7 574.0,523.9ZM584.6,523.9 589.8,518.7 594.8,523.7 594.8,524.1 589.8,529.1ZM558.3,539.6 553.1,534.4 558.3,529.2 563.5,534.4ZM579.3,539.6 574.1,534.4 579.3,529.2 584.5,534.4ZM568.8,550.1 563.6,544.9 568.8,539.7 574.0,544.9ZM589.8,550.1 584.6,544.9 589.8,539.7 594.8,544.7 594.8,545.1ZM561.6,553.5 554.6,553.9 558.3,550.2ZM581.6,552.5 576.7,552.8 579.3,550.2Z"/>
<!-- board outline -->
<path fill="none" stroke="#646464" stroke-width="2" stroke-linejoin="round" d="M183,226H889V671.97L183,664.54Z"/>
<!-- origin cross -->
<path fill="none" stroke="#0000ff" stroke-width="1" d="M814.5,114V849M0,746.5H1053"/>
<!-- handles -->
<g fill="#0000ff">
<rect x="255" y="268" width="6" height="6"/>
<rect x="255" y="528" width="6" height="6"/>
<rect x="269" y="572" width="6" height="6"/>
<rect x="722" y="275" width="6" height="6"/>
<rect x="730" y="550" width="6" height="6"/>
</g>
</svg>
<div class="abs" id="dock"></div>
<!-- menu bar -->
<div class="mi" style="left:-9px;letter-spacing:0.2px">озиционирование</div>
<div class="mi" style="left:105px;letter-spacing:-0.15px">Трассировка</div>
<div class="mi" style="left:188.5px;letter-spacing:-0.17px">ВЧ Трассировка</div>
<div class="mi" style="left:290.7px;letter-spacing:-0.14px">Проверка</div>
<div class="mi" style="left:358.7px;letter-spacing:-0.165px">Библиотека</div>
<div class="mi" style="left:437.3px;letter-spacing:0.1px">Инструменты</div>
<div class="mi" style="left:528px;letter-spacing:-0.28px">Справка</div>
<!-- combos -->
<div class="combo" style="left:308px;top:49px;width:65px"><span id="c1">390%</span></div>
<div class="combo" style="left:385px;top:49px;width:78px"><span id="c2">0.025 in</span></div>
<div class="combo dis" style="left:576px;top:49px;width:122px"><span id="c3">Барьер</span></div>
<div class="combo dis" style="left:-40px;top:84px;width:61px"></div>
<div class="combo dis" style="left:624px;top:84px;width:97px"><span id="c4">Верхний (1)</span></div>
<svg id="tb" width="1053" height="75" viewBox="0 41 1053 75" style="position:absolute;left:0;top:41px" shape-rendering="crispEdges">
<!-- ===== toolbar frames ===== -->
<g fill="none" stroke-width="1">
<path stroke="#fff" d="M0,43.5H857M0,78.5H901M471.5,43V77M707.5,43V77M345.5,78V112M729.5,78V112"/>
<path stroke="#a0a0a0" d="M0,77.5H858M857.5,43V78M0,112.5H902M901.5,78V113M0,113.5H1053M470.5,43V77M706.5,43V77M344.5,78V112M728.5,78V112"/>
<!-- separators -->
<path stroke="#a0a0a0" d="M42.5,47V73M140.5,47V73M208.5,47V73M378.5,47V73M750.5,47V73M818.5,47V73M57.5,82V108M275.5,82V108M478.5,82V108M546.5,82V108M614.5,82V108M832.5,82V108"/>
</g>
<!-- grips -->
<g id="grips">
<path fill="none" stroke="#fff" stroke-width="1" stroke-dasharray="2 2" d="M475.500,45V77M711.500,45V77M349.500,80V112M733.500,80V112"/>
<path fill="none" stroke="#b4b4b4" stroke-width="1" stroke-dasharray="2 2" d="M476.500,46V78M712.500,46V78M350.500,81V113M734.500,81V113"/>
</g>
<!-- combo chevrons -->
<g fill="none" stroke="#404040" stroke-width="1.1" shape-rendering="auto">
<path d="M359.8,58.6l4.3,4.3l4.3,-4.3M449.600,58.600l4.300,4.300l4.300,-4.300M684.800,58.600l4.300,4.300l4.300,-4.300M7.800,93.700l4.300,4.300l4.300,-4.300M707.800,93.700l4.300,4.300l4.300,-4.300"/>
</g>
<!--ICONS_BEGIN--><g shape-rendering="auto" fill="none">
<!-- ============ ROW 1 ============ -->
<!-- partial icon at far left -->
<path fill="#00008b" d="M0,55.5h0.8l1,2v5l-1,2H0z"/>
<!-- 4-squares -->
<g stroke="#00008b" stroke-width="1.3" shape-rendering="crispEdges"><rect x="19.5" y="55.5" width="5" height="4"/><rect x="26.5" y="55.5" width="5" height="4"/><rect x="19.5" y="61.5" width="5" height="4"/><rect x="26.5" y="61.5" width="5" height="4"/></g>
<!-- scissors -->
<g stroke-width="1.200"><path stroke="#000" d="M60.300,53l2.400,7.200l2.300,-7.200"/><path stroke="#00008b" d="M62.700,59.800l-2,2M62.700,59.800l2,2"/><ellipse cx="59.800" cy="63.900" rx="1.600" ry="2.400" stroke="#00008b" stroke-width="1"/><ellipse cx="65.500" cy="63.900" rx="1.600" ry="2.400" stroke="#00008b" stroke-width="1"/></g>
<!-- copy -->
<g shape-rendering="crispEdges"><path fill="#fff" stroke="#000" stroke-width="1" d="M85.500,53.500h5l2,2v7h-7z"/><path stroke="#000" d="M87,56.500h3M87,58.500h3M87,60.500h3"/><path fill="#fff" stroke="#00008b" stroke-width="1" d="M91.500,56.500h5l3,3v6h-8z"/><path stroke="#00008b" d="M91,56.500h6M91,57v9M91,65.500h9"/><path stroke="#000" d="M93,59.500h2M93,61.500h5M93,63.500h5"/></g>
<!-- paste (disabled) -->
<g><rect x="115" y="55" width="13.5" height="11" rx="1.5" fill="#a0a0a0"/><rect x="119" y="53" width="6" height="3" rx="1" fill="#a0a0a0"/><rect x="119" y="56" width="6.500" height="1" fill="#d8d8d8"/><path shape-rendering="crispEdges" fill="#f0f0f0" stroke="#a0a0a0" stroke-width="1.2" d="M121.5,60.5h6l3,2.5v3.5h-9z"/><path shape-rendering="crispEdges" stroke="#a0a0a0" d="M123,62.5h4M123,64.5h6"/></g>
<!-- undo -->
<g><path fill="#00008b" d="M154.7,57l0.3,6l5.2,-1.4z"/><path stroke="#00008b" stroke-width="1.3" d="M158,60.2c1.5,-3.5 5,-5 7.3,-3c2,1.8 1.2,4.5 -0.5,6.2"/></g>
<!-- redo (disabled) -->
<g><path fill="#a0a0a0" d="M197.4,57l-0.3,6l-5.2,-1.4z"/><path stroke="#a0a0a0" stroke-width="1.3" d="M194.1,60.2c-1.5,-3.5 -5,-5 -7.3,-3c-2,1.8 -1.2,4.5 0.5,6.2"/></g>
<!-- zoom window -->
<g><circle cx="227.3" cy="58" r="5.6" stroke="#004080" stroke-width="1.2"/><rect shape-rendering="crispEdges" x="223.5" y="55.5" width="8" height="5" stroke="#000" stroke-width="1.3"/><path stroke="#0a2a2a" stroke-width="2.2" d="M231.5,62.3l5.2,4.8"/></g>
<!-- zoom out (dashed) -->
<g><circle cx="257.4" cy="57.700" r="5.9" stroke="#000" stroke-width="1.1" stroke-dasharray="3 1"/><path stroke="#000" stroke-width="1" stroke-dasharray="2 1.2" d="M254.5,56.5h6M254.5,59.5h6"/><path stroke="#000" stroke-width="2" d="M261.9,62.300l5,4.800"/></g>
<!-- zoom previous -->
<g><circle cx="287.6" cy="57.700" r="5.9" stroke="#000" stroke-width="1.100"/><path stroke="#000" stroke-width="1.2" d="M291.5,54.8l-6,5"/><path fill="#000" d="M283.6,61.8l0.6,-4.6l3.6,3.6z"/><path stroke="#000" stroke-width="1" stroke-dasharray="1.5 1.2" d="M284.5,54.5h5"/><path stroke="#000" stroke-width="2" d="M292.100,62.300l5,4.800"/></g>
<!-- shapes -->
<rect shape-rendering="crispEdges" x="490.500" y="56.500" width="7" height="8" fill="#c0c0c0" stroke="#000" stroke-width="1.300"/>
<circle cx="500" cy="64.200" r="3.300" fill="#fff" stroke="#000" stroke-width="1"/>
<path fill="#00f0f8" stroke="#000" stroke-width="1" stroke-linejoin="miter" d="M496,60.300l7.500,-8v8z"/>
<!-- Abc -->
<path shape-rendering="crispEdges" fill="#000" d="M522,55h1v1h-1zM521,56h3v1h-3zM521,57h1v1h-1zM523,57h1v1h-1zM525,57h4v1h-4zM532,57h4v1h-4zM521,58h1v1h-1zM523,58h1v1h-1zM526,58h1v1h-1zM529,58h1v1h-1zM531,58h1v1h-1zM535,58h1v1h-1zM520,59h5v1h-5zM526,59h3v1h-3zM531,59h1v1h-1zM520,60h1v1h-1zM524,60h1v1h-1zM526,60h1v1h-1zM529,60h1v1h-1zM531,60h1v1h-1zM519,61h2v1h-2zM524,61h3v1h-3zM529,61h1v1h-1zM531,61h1v1h-1zM534,61h2v1h-2zM519,62h3v1h-3zM523,62h6v1h-6zM532,62h3v1h-3z"/>
<!-- picture -->
<g shape-rendering="crispEdges"><rect x="550.500" y="53.500" width="14" height="13" fill="#f8f870" stroke="#000" stroke-width="1.300"/></g><path fill="#808080" d="M551.200,66l5,-6l2.800,3l1.700,-1.800l3.300,3.500v1.300z"/><path stroke="#f0f0f0" stroke-width="0.800" d="M556.500,60.500l4,5M559.500,62.500l3.500,3.500M554.500,63l2,3"/><circle cx="561" cy="56.300" r="1.800" fill="#606010"/>
<!-- disabled: align icon -->
<path fill="#a0a0a0" d="M725,53h2v11h12v1.500h-14zM728,56h4v7h-4zM727,57h1v1h-1zM732,57h1v1h-1zM727,59h1v1h-1zM732,59h1v1h-1zM727,61h1v1h-1zM732,61h1v1h-1zM735,56h4v7h-4zM734,57h1v1h-1zM739,57h1v1h-1zM734,59h1v1h-1zM739,59h1v1h-1zM734,61h1v1h-1zM739,61h1v1h-1z"/>
<path fill="#a0a0a0" d="M773,54h4v5h-4zM772,55h1v1h-1zM777,55h1v1h-1zM772,57h1v1h-1zM777,57h1v1h-1zM774,53h1v1h-1zM774,59h1v1h-1zM776,53h1v1h-1zM776,59h1v1h-1zM765,61h5v5h-5zM764,62h1v1h-1zM770,62h1v1h-1zM764,64h1v1h-1zM770,64h1v1h-1zM766,60h1v1h-1zM766,66h1v1h-1zM768,60h1v1h-1zM768,66h1v1h-1zM765,55.500h4v1h-4zM765,55.500h1v3.500h-1zM768.500,53.500l2.500,2.500l-2.500,2.500zM773.500,64h3.500v1h-3.500zM776,61.500h1v3.500h-1zM774,62l-2.500,2.500l2.500,2.500z"/>
<path fill="#a0a0a0" d="M794,54h5v6h-5zM793,55h1v1h-1zM799,55h1v1h-1zM793,57h1v1h-1zM799,57h1v1h-1zM793,59h1v1h-1zM799,59h1v1h-1zM795,53h1v1h-1zM795,60h1v1h-1zM797,53h1v1h-1zM797,60h1v1h-1zM803,55h4v5h-4zM802,56h1v1h-1zM807,56h1v1h-1zM802,58h1v1h-1zM807,58h1v1h-1zM801.500,52.500h1v1h-1zM807.500,52.500h1v1h-1zM801.500,61.500h1v1h-1zM807.500,61.500h1v1h-1zM804,53.500h1v1h-1zM806,53.500h1v1h-1zM804,60.500h1v1h-1zM806,60.500h1v1h-1zM803,64.500h3.800v1h-3.800zM805.800,62.500h1v3h-1zM803.500,62.500l-2.500,2.500l2.500,2.500z"/>
<!-- doc + chip -->
<g shape-rendering="crispEdges"><rect x="831.5" y="56.5" width="11" height="10" fill="#fff" stroke="#000" stroke-width="1"/><path fill="#000" d="M833,60h2v1h-2zM836,60h2v1h-2zM833,62h2v1h-2zM836,62h5v1h-5zM833,64h2v1h-2zM836,64h5v1h-5z"/><rect x="840.500" y="53.500" width="4" height="6" fill="#00ffff" stroke="#008000" stroke-width="1"/><path fill="#000" d="M839,54h1v1h-1zM839,58h1v1h-1zM845,54h1v1h-1zM845,56h1v1h-1zM845,58h1v1h-1z"/><rect x="839" y="56" width="1" height="1" fill="#ff0000"/></g>

<!-- ============ ROW 2 ============ -->
<!-- binoculars -->
<g fill="#000"><path d="M34.500,88h3v2.500l1,1v3.500h-1.500v5.800h-5.200v-6l2.700,-4.500zM44.500,88h-3v2.500l-1,1v3.500h1.500v5.800h5.200v-6l-2.700,-4.500z"/><rect x="37.500" y="92.500" width="4" height="3"/></g>
<g fill="#f0f0f0" shape-rendering="crispEdges"><rect x="35.500" y="89" width="1" height="1.500"/><rect x="42.500" y="89" width="1" height="1.500"/><rect x="33" y="97.500" width="1" height="2.500"/><rect x="42" y="97.500" width="1" height="2.500"/><rect x="35" y="93" width="1" height="1"/><rect x="43" y="93" width="1" height="1"/></g>
<!-- line tool -->
<path stroke="#0000ff" stroke-width="1" d="M73.500,90.500l9,9"/><circle cx="72.800" cy="89.800" r="1.500" stroke="#000" stroke-width="1" fill="#fff"/><circle cx="83.200" cy="100.200" r="1.500" stroke="#000" stroke-width="1" fill="#fff"/>
<!-- green pad -->
<path stroke="#00f000" stroke-width="1" d="M105.500,87.900h4.700l3.700,3.700v5.100l-3.700,3.800h-4.700l-3,-3"/>
<path fill="#000" d="M105.700,89.400h4.200l2.900,2.900v4.200l-2.900,2.900h-4.200l-2.900,-2.900v-4.200z"/><path fill="#fff" d="M107.800,91.200l3.100,3.100l-3.100,3.100l-3.100,-3.100z"/>
<!-- route (blue A) -->
<path fill="#0000ff" d="M135.500,89.800h3.800l2.800,2.800v3.300l2.800,2.900v1.500l-1.300,1.300h-1.700l-3.300,-4.100h-3.100l-2.800,-2.800v-2.100z"/><path fill="#ff0000" d="M132.600,95.800l3,2.600l-2,1l-1,1.800h-1.800v-3.600z"/><path fill="#fff" d="M137.400,91.800l2.500,2.500l-2.500,2.500l-2.500,-2.500z"/>
<!-- gray octagon w/ ring -->
<path fill="#c0c0c0" stroke="#909090" stroke-width="0.8" d="M164.900,88.200h5.300l3.700,3.700v5l-3.700,3.700h-5.300l-3.700,-3.700v-5z"/><circle cx="167.550" cy="94.400" r="3.300" fill="#fff" stroke="#000" stroke-width="1.200"/>
<!-- gray octagon w/ dot -->
<path fill="#c0c0c0" d="M194.800,88h5.400l3.800,3.800v5l-3.800,3.800h-5.400l-3.800,-3.800v-5z"/><circle cx="197.500" cy="94.300" r="3.500" fill="#000"/>
<!-- blue square traces -->
<rect x="221" y="88" width="14" height="14" fill="#0000ff" shape-rendering="crispEdges"/><path stroke="#fff" stroke-width="1.300" d="M222,97.500l6.500,-6.500h3l3,-3M223.500,102l5.500,-5.500h2.500l3.500,3.500"/>
<!-- green screen -->
<path fill="#00e800" d="M251.500,89h13l0.800,0.800v8.200l-2.300,2.700h-9.500l-2.500,-2.700z"/><path fill="#007000" d="M253.500,100.700h9.500l1.200,-1.400h-11.900z"/><rect x="252.700" y="90.400" width="11" height="6.800" fill="#fff" shape-rendering="crispEdges"/><path stroke="#0000e0" stroke-width="1.200" d="M256.500,93l3,3h4"/><circle cx="255.500" cy="92" r="1.500" stroke="#0000e0" stroke-width="1" fill="#fff"/>
<!-- dimension -->
<path stroke="#008080" stroke-width="1.100" d="M291.500,99.500l9,-9M291.200,96.300v3.500h3.500M297.300,90.200h3.500v3.500"/><path stroke="#000" stroke-width="1" d="M289.300,97.300l3.600,3.800M299.200,88.200l3.600,3.800"/>
<!-- table grid -->
<rect x="319" y="89" width="13" height="13" fill="#00008b" shape-rendering="crispEdges"/><g fill="#fff"><rect x="320.4" y="90.2" width="2.5" height="2"/><rect x="324" y="90.2" width="2.8" height="2"/><rect x="328" y="90.2" width="2.7" height="2"/><rect x="320.4" y="93.3" width="2.5" height="2"/><rect x="324" y="93.3" width="2.8" height="2"/><rect x="328" y="93.3" width="2.7" height="2"/><rect x="320.4" y="96.3" width="2.5" height="2"/><rect x="324" y="96.3" width="2.8" height="2"/><rect x="328" y="96.3" width="2.7" height="2"/><rect x="320.4" y="99.2" width="2.5" height="2"/><rect x="324" y="99.2" width="2.8" height="2"/><rect x="328" y="99.2" width="2.7" height="2"/></g>
<!-- route 2 circles -->
<g stroke="#0000ff" stroke-width="1.200"><circle cx="365.100" cy="91" r="1.700"/><circle cx="375.900" cy="98.900" r="1.700"/><path d="M366.200,92.200l2,2.200h4.300l2.400,3.300"/></g>
<!-- move via -->
<g><path stroke="#000" stroke-width="1.300" d="M400.500,90v9"/><path fill="#000" d="M400.500,87.500l3,3.500h-6zM400.500,101.500l3,-3.500h-6z"/><g stroke="#0000ff" stroke-width="1.200"><circle cx="395" cy="98.500" r="1.700"/><circle cx="406.200" cy="98.500" r="1.700"/><path d="M396.200,97.200c1.500,-2.500 3,-3 4.300,-3c1.300,0 2.800,0.500 4.300,3"/></g></g>
<!-- cross route -->
<g><g stroke="#0000ff" stroke-width="1.200"><circle cx="424.700" cy="89.800" r="1.700"/><circle cx="424.700" cy="100.300" r="1.700"/><path d="M425.800,91l5,4.500l4.500,4.500M425.800,99l5,-3.500l4.500,-4.500"/></g><path fill="#000" d="M436.200,89.500v4.500l-1.500,-1.500l-2,2l-1,-1l2,-2l-1.500,-1.500zM436.200,101v-4.500l-1.500,1.500l-2,-2l-1,1l2,2l-1.500,1.500z"/><rect x="430" y="94.500" width="2" height="2" fill="#ff0000"/></g>
<!-- doc + route -->
<g shape-rendering="crispEdges"><rect x="453.5" y="91.5" width="11" height="10" fill="#fff" stroke="#000" stroke-width="1"/><path fill="#000" d="M455,95h2v1h-2zM458,95h5v1h-5zM455,97h2v1h-2zM458,97h5v1h-5zM455,99h2v1h-2zM458,99h5v1h-5z"/></g><g stroke="#0000ff" stroke-width="1.200"><circle cx="457" cy="89" r="1.500" fill="#f0f0f0"/><circle cx="467.100" cy="97" r="1.500" fill="#f0f0f0"/><path d="M458.200,90.200l2.600,2.800h3.200l2.200,2.600"/></g>
<!-- play -->
<path fill="#00e040" d="M495,88v13.500l8.200,-6.700z"/><path stroke="#205020" stroke-width="1.200" d="M495.500,101.300l7.500,-6.300"/>
<!-- doc + arrow -->
<g shape-rendering="crispEdges"><rect x="521.5" y="91.5" width="11" height="10" fill="#fff" stroke="#000" stroke-width="1"/><path fill="#000" d="M523,95h2v1h-2zM526,95h5v1h-5zM523,97h2v1h-2zM526,97h5v1h-5zM523,99h2v1h-2zM526,99h5v1h-5z"/></g><path fill="#00f000" d="M529.800,86.800v10.400l5.400,-5.200z"/><path stroke="#087008" stroke-width="0.800" d="M530.200,97l5,-4.800"/>
<!-- DRC check -->
<path shape-rendering="crispEdges" fill="none" stroke="#fff" stroke-opacity="0.55" stroke-width="1.6" stroke-linejoin="round" d="M559,90h2v1h-2zM563,90h3v1h-3zM567,90h3v1h-3zM559,91h1v1h-1zM561,91h1v1h-1zM563,91h1v1h-1zM565,91h1v1h-1zM567,91h1v1h-1zM569,91h1v1h-1zM559,92h1v1h-1zM561,92h1v1h-1zM563,92h2v1h-2zM567,92h1v1h-1zM559,93h1v1h-1zM561,93h1v1h-1zM563,93h1v1h-1zM567,93h1v1h-1zM569,93h1v1h-1zM559,94h2v1h-2zM563,94h1v1h-1zM565,94h1v1h-1zM567,94h3v1h-3z"/>
<path shape-rendering="crispEdges" fill="#000" d="M559,90h2v1h-2zM563,90h3v1h-3zM567,90h3v1h-3zM559,91h1v1h-1zM561,91h1v1h-1zM563,91h1v1h-1zM565,91h1v1h-1zM567,91h1v1h-1zM569,91h1v1h-1zM559,92h1v1h-1zM561,92h1v1h-1zM563,92h2v1h-2zM567,92h1v1h-1zM559,93h1v1h-1zM561,93h1v1h-1zM563,93h1v1h-1zM567,93h1v1h-1zM569,93h1v1h-1zM559,94h2v1h-2zM563,94h1v1h-1zM565,94h1v1h-1zM567,94h3v1h-3z"/>
<path fill="#ff0000" d="M562,96h2.300l1.700,2.800l2.200,-2.600l5,-7.400h1.300l-4.700,8.400l-2.200,4.700h-3.400l-1,-3.200l-1.200,-1.400z"/>
<!-- DRC doc -->
<g shape-rendering="crispEdges"><rect x="589.5" y="91.5" width="11" height="10" fill="#fff" stroke="#008080" stroke-width="1"/><path fill="#000" d="M591,95h2v1h-2zM591,97h2v1h-2zM591,99h2v1h-2zM594,97h5v1h-5zM594,99h5v1h-5z"/><rect x="594" y="95" width="5" height="1" fill="#ff0000"/>
<path fill="#fff" fill-opacity="0.55" stroke="#fff" stroke-opacity="0.55" stroke-width="1.6" stroke-linejoin="round" d="M593,89h2v1h-2zM597,89h3v1h-3zM601,89h3v1h-3zM593,90h1v1h-1zM595,90h1v1h-1zM597,90h1v1h-1zM599,90h1v1h-1zM601,90h1v1h-1zM603,90h1v1h-1zM593,91h1v1h-1zM595,91h1v1h-1zM597,91h2v1h-2zM601,91h1v1h-1zM593,92h1v1h-1zM595,92h1v1h-1zM597,92h1v1h-1zM601,92h1v1h-1zM603,92h1v1h-1zM593,93h2v1h-2zM597,93h1v1h-1zM599,93h1v1h-1zM601,93h3v1h-3z"/>
<path fill="#000" d="M593,89h2v1h-2zM597,89h3v1h-3zM601,89h3v1h-3zM593,90h1v1h-1zM595,90h1v1h-1zM597,90h1v1h-1zM599,90h1v1h-1zM601,90h1v1h-1zM603,90h1v1h-1zM593,91h1v1h-1zM595,91h1v1h-1zM597,91h2v1h-2zM601,91h1v1h-1zM593,92h1v1h-1zM595,92h1v1h-1zM597,92h1v1h-1zM601,92h1v1h-1zM603,92h1v1h-1zM593,93h2v1h-2zM597,93h1v1h-1zM599,93h1v1h-1zM601,93h3v1h-3z"/></g>
<!-- split track -->
<path stroke="#000" stroke-width="1.300" stroke-linejoin="round" d="M748,95h3.300l2.200,-3.200h5l2.200,3.200h3M751.300,95l2.200,3.200h5l2.200,-3.200"/>
<!-- move pulse -->
<g><path stroke="#0000ff" stroke-width="1.200" shape-rendering="crispEdges" d="M778,101.500h14M778,98.500h3.500v-3h7v3h3.500"/><path stroke="#000" stroke-width="1.300" d="M785,91v7"/><path fill="#000" d="M785,88.500l2.800,3.300h-5.600zM785,100.300l2.800,-3.300h-5.600z"/></g>
<!-- cross pulse -->
<g><path stroke="#0000ff" stroke-width="1.200" d="M808,101.500h14M808,99l4,-2l3,-2.500l3,2.500l4,2"/><path stroke="#000" stroke-width="1.300" d="M810,90.500l4.500,3.800M820,90.500l-4.500,3.800"/><path fill="#000" d="M808.200,89.300h4l-4,3.500zM821.800,89.300h-4l4,3.500z"/><rect x="814" y="93.500" width="2" height="2" fill="#ff0000"/></g>
<!-- pulses -->
<path stroke="#0000ff" stroke-width="1.200" d="M846,98.500h4.500v-6c0,-2.500 4,-2.500 4,0v6h5"/>
<path stroke="#0000ff" stroke-width="1.200" d="M876,98.500h15M876,95.500h4v-3c0,-2.500 3.500,-2.500 3.500,0v3h7.500"/>
</g>
<!--ICONS_END-->
</svg>

</body></html>
